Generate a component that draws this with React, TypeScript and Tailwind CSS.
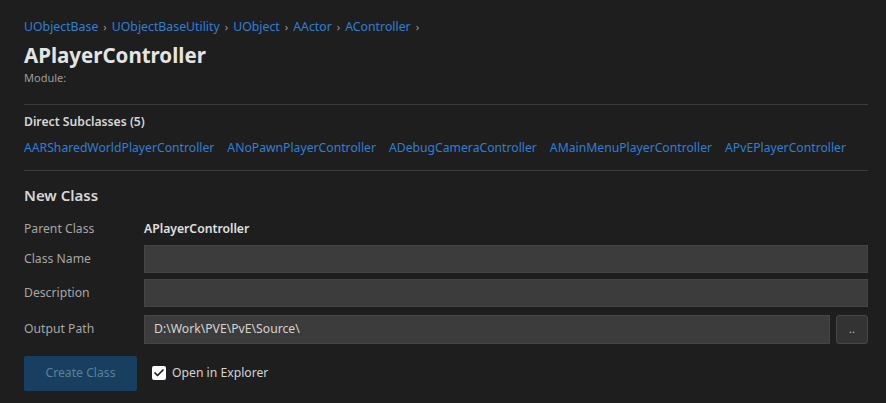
import { Check } from 'lucide-react'

const crumbs = ['UObjectBase', 'UObjectBaseUtility', 'UObject', 'AActor', 'AController']

const subclasses = [
  'AARSharedWorldPlayerController',
  'ANoPawnPlayerController',
  'ADebugCameraController',
  'AMainMenuPlayerController',
  'APvEPlayerController',
]

function Field({ label, className = '', children }: { label: string; className?: string; children: React.ReactNode }) {
  return (
    <div className={`flex items-center ${className}`}>
      <div className="w-[120px] shrink-0 text-[12.2px] text-[#a6a6a6]">{label}</div>
      <div className="flex flex-1 gap-[6px]">{children}</div>
    </div>
  )
}

function TextBox({ value = '', tall = false }: { value?: string; tall?: boolean }) {
  return (
    <div
      className={`flex flex-1 items-center border border-[#454545] bg-[#3c3c3c] px-[9px] text-[12.2px] text-[#d4d4d4] ${tall ? 'h-[29px]' : 'h-[28px]'}`}
    >
      {value}
    </div>
  )
}

export default function App() {
  return (
    <div
      className="min-h-[403px] bg-[#1e1e1e] pl-[24px] pr-[18px] pt-[17px] text-[#cccccc]"
      style={{ fontFamily: '"Noto Sans", "Open Sans", sans-serif' }}
    >
      <nav className="flex items-center text-[12.3px] leading-[20px]">
        {crumbs.map((c) => (
          <span key={c} className="flex items-center">
            <a className="text-[#2f7fd6]">{c}</a>
            <span className="mx-[5px] text-[11px] text-[#9a9a9a]">›</span>
          </span>
        ))}
      </nav>
      <h1 className="mt-[4px] text-[20.5px] font-bold leading-[28px] text-[#e4e4e4]">APlayerController</h1>
      <div className="mt-[1px] text-[11px] leading-[16px] text-[#9d9d9d]">Module:</div>

      <div className="mt-[18px] border-t border-[#3b3b3b]" />

      <div className="mt-[7px] text-[12.2px] font-semibold leading-[20px] text-[#d6d6d6]">Direct Subclasses (5)</div>
      <div className="mt-[6px] flex gap-[13px] text-[12.2px] leading-[20px]">
        {subclasses.map((s) => (
          <a key={s} className="text-[#2f7fd6]">
            {s}
          </a>
        ))}
      </div>

      <div className="mt-[12px] border-t border-[#3b3b3b]" />

      <h2 className="mt-[12px] text-[15px] font-semibold leading-[24px] text-[#d6d6d6]">New Class</h2>

      <div className="mt-[12px] flex h-[20px] items-center">
        <div className="w-[120px] shrink-0 text-[12.2px] text-[#a6a6a6]">Parent Class</div>
        <div className="text-[12.2px] font-semibold text-[#e0e0e0]">APlayerController</div>
      </div>
      <Field label="Class Name" className="mt-[6px]">
        <TextBox />
      </Field>
      <Field label="Description" className="mt-[6px]">
        <TextBox />
      </Field>
      <Field label="Output Path" className="mt-[8px]">
        <TextBox value="D:\Work\PVE\PvE\Source\" tall />
        <button className="flex h-[29px] w-[32px] items-center justify-center rounded-[3px] border border-[#474747] bg-[#333333] text-[11px] text-[#bbbbbb]">
          ..
        </button>
      </Field>

      <div className="mt-[12px] flex items-center">
        <button className="h-[35px] w-[113px] rounded-[2px] bg-[#183f5f] text-[12.2px] text-[#5b7f9e]">Create Class</button>
        <label className="ml-[15px] flex items-center gap-[6px] text-[12.2px] text-[#d4d4d4]">
          <span className="flex h-[14px] w-[14px] items-center justify-center rounded-[2px] bg-white">
            <Check size={12} strokeWidth={3.5} className="text-[#1e1e1e]" />
          </span>
          Open in Explorer
        </label>
      </div>
    </div>
  )
}
